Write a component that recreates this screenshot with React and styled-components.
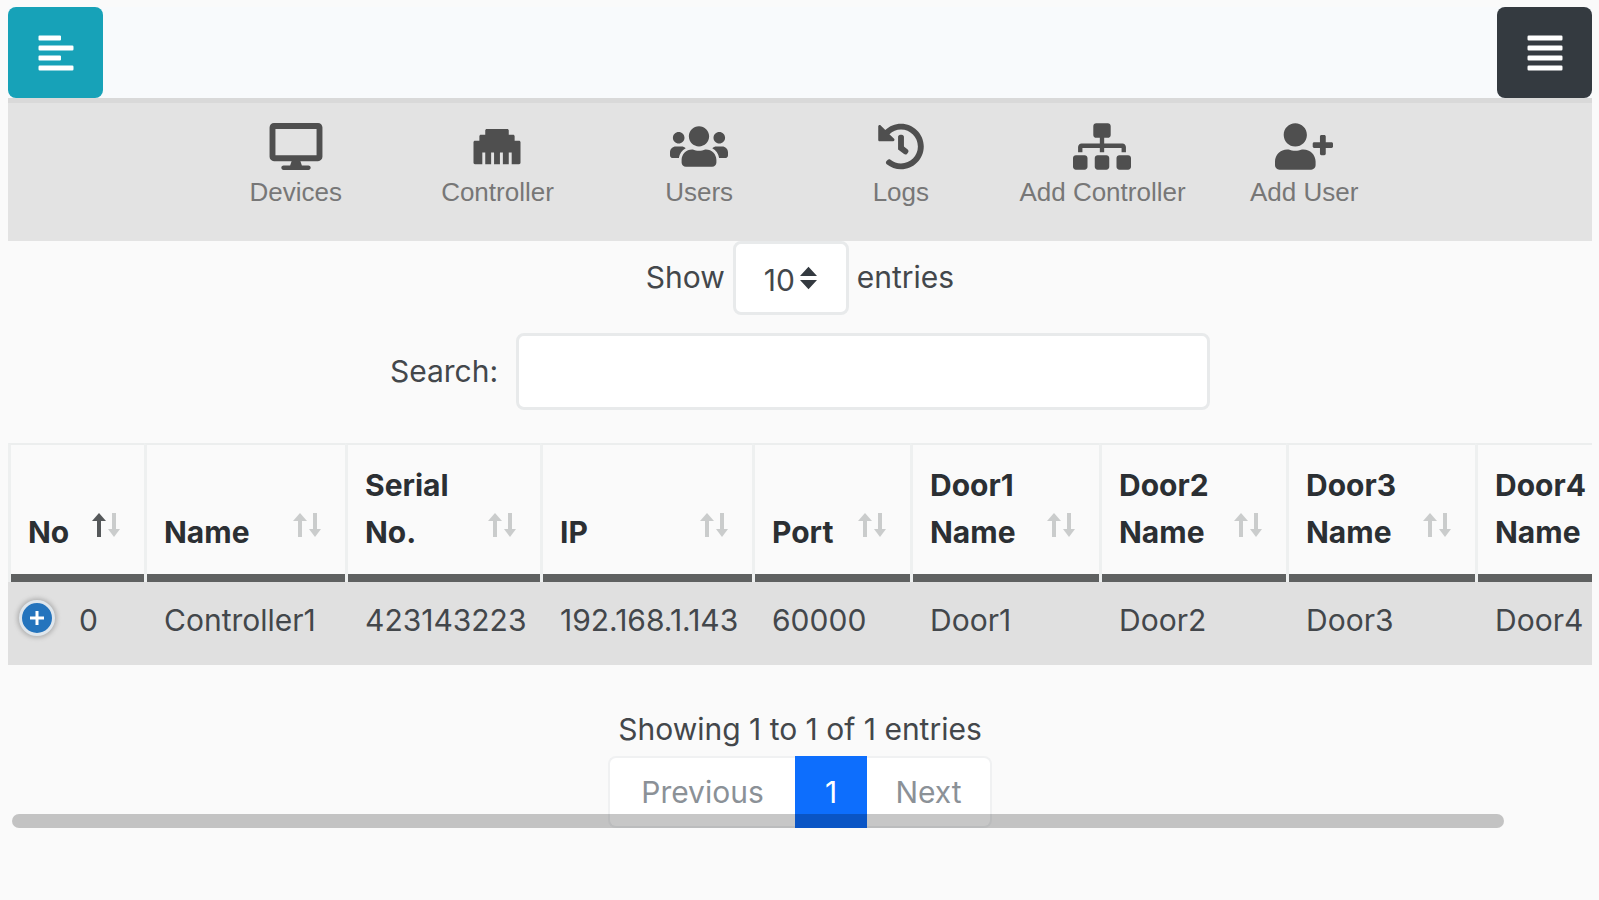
import React from 'react';
import styled, { createGlobalStyle } from 'styled-components';
import {
  FaAlignLeft,
  FaAlignJustify,
  FaDesktop,
  FaEthernet,
  FaUsers,
  FaHistory,
  FaSitemap,
  FaUserPlus,
} from 'react-icons/fa';

const GlobalStyle = createGlobalStyle`
  * {
    box-sizing: border-box;
  }

  body {
    margin: 0;
    background: #fafafa;
    color: #43474b;
    font-family: Inter, 'Liberation Sans', sans-serif;
    font-size: 30px;
    line-height: 47px;
  }

  button, input, select {
    font: inherit;
    color: inherit;
  }
`;

const Page = styled.div`
  padding: 7px 7px 0 8px;
`;

const TopBar = styled.header`
  display: flex;
  justify-content: space-between;
  background: #f8fafc;
`;

const ToggleButton = styled.button`
  display: flex;
  align-items: center;
  justify-content: center;
  width: 95px;
  height: 91px;
  padding: 0;
  border: 0;
  border-radius: 8px;
  background: ${(props) => (props.$dark ? '#343a40' : '#17a2b8')};
  color: white;
  cursor: pointer;

  svg {
    width: 36px;
    height: 40px;
  }
`;

const Nav = styled.nav`
  height: 143px;
  border-top: 5px solid #d9d9d9;
  background: #e3e3e3;
`;

const NavList = styled.div`
  display: grid;
  grid-template-columns: repeat(6, 1fr);
  max-width: 1210px;
  margin: 0 auto;
  padding-top: 20px;
`;

const NavLink = styled.a`
  display: flex;
  flex-direction: column;
  align-items: center;
  gap: 6px;
  color: #777;
  font-family: 'Liberation Sans', sans-serif;
  font-size: 26px;
  line-height: 32px;
  text-decoration: none;
  white-space: nowrap;

  svg {
    width: 58px;
    height: 47px;
    color: #4f4f4f;
  }
`;

const LengthRow = styled.label`
  display: flex;
  justify-content: center;
  gap: 8px;
  line-height: 72px;
`;

const SelectBox = styled.span`
  position: relative;
  display: block;
  width: 116px;
  height: 74px;

  svg {
    position: absolute;
    top: 25px;
    right: 32px;
    width: 17px;
    height: 24px;
    pointer-events: none;
  }
`;

const Select = styled.select`
  appearance: none;
  width: 100%;
  height: 100%;
  padding: 0 28px;
  border: 3px solid #e8eaeb;
  border-radius: 8px;
  background: white;
`;

const SearchRow = styled.label`
  display: flex;
  align-items: center;
  justify-content: center;
  gap: 18px;
  margin-top: 18px;
`;

const SearchInput = styled.input`
  width: 694px;
  height: 77px;
  padding: 0 24px;
  border: 3px solid #e8eaeb;
  border-radius: 8px;
  background: white;
`;

const TableWrap = styled.div`
  margin-top: 33px;
  overflow-x: auto;
  scrollbar-width: none;
`;

const Table = styled.table`
  table-layout: fixed;
  width: 1664px;
  border-collapse: separate;
  border-spacing: 0;
`;

/* The dark rule is an inset shadow, so the column borders cut straight through it */
const HeadCell = styled.th`
  height: 139px;
  padding: 0 24px 26px 17px;
  border-top: 2px solid #eceeee;
  border-left: 3px solid #eef0f0;
  box-shadow: inset 0 -8px #5f6161;
  color: #2b2f33;
  font-weight: 700;
  text-align: left;
  vertical-align: bottom;
`;

const SortButton = styled.button`
  display: flex;
  align-items: flex-end;
  justify-content: space-between;
  width: 100%;
  padding: 0;
  border: 0;
  background: none;
  text-align: left;
  cursor: pointer;

  svg {
    flex: none;
    width: 28px;
    height: 24px;
    margin-bottom: 19px;
  }
`;

const Cell = styled.td`
  height: 83px;
  padding: 0 0 6px 20px;
  background: #e0e0e0;
  white-space: nowrap;
`;

const FirstCell = styled.div`
  display: flex;
  align-items: center;
  gap: 24px;
  margin-left: -9px;
`;

const ExpandButton = styled.button`
  display: flex;
  align-items: center;
  justify-content: center;
  width: 36px;
  height: 36px;
  margin-bottom: 6px;
  padding: 0;
  border: 3px solid #dfe6ec;
  border-radius: 50%;
  box-shadow: 0 0 4px 2px #b4b4b4;
  background: #2474bd;
  color: white;
  cursor: pointer;

  svg {
    width: 16px;
    height: 16px;
  }
`;

const Footer = styled.footer`
  position: relative;
  display: flex;
  flex-direction: column;
  align-items: center;
  padding-top: 41px;
`;

const Info = styled.div`
  height: 50px;
`;

const Pagination = styled.div`
  display: flex;
  height: 72px;
`;

const PageButton = styled.button`
  width: ${(props) => props.$width};
  padding: 0;
  border: ${(props) => (props.$active ? '0' : '2px solid #f0f1f2')};
  border-left-width: ${(props) => (props.$last ? '0' : '')};
  border-right-width: ${(props) => (props.$first ? '0' : '')};
  border-radius: ${(props) => (props.$first ? '8px 0 0 8px' : props.$last ? '0 8px 8px 0' : '0')};
  background: ${(props) => (props.$active ? '#0d6efd' : 'white')};
  color: ${(props) => (props.$active ? 'white' : '#8b9197')};
  cursor: pointer;
`;

/* Overlay scroll thumb, drawn on top of the pagination */
const ScrollThumb = styled.div`
  position: absolute;
  left: 4px;
  right: 88px;
  bottom: 0;
  height: 14px;
  border-radius: 7px;
  background: rgba(0, 0, 0, 0.22);
  pointer-events: none;
`;

const SortIcon = ({ active }) => (
  <svg viewBox="0 0 28 24" aria-hidden="true">
    <path d="M7 0 L14 8 H9 V24 H5 V8 H0 Z" fill={active ? '#55585a' : '#cacccc'} />
    <path d="M22 24 L16 16 H20 V0 H24 V16 H28 Z" fill="#cacccc" />
  </svg>
);

const navItems = [
  { label: 'Devices', Icon: FaDesktop },
  { label: 'Controller', Icon: FaEthernet },
  { label: 'Users', Icon: FaUsers },
  { label: 'Logs', Icon: FaHistory },
  { label: 'Add Controller', Icon: FaSitemap },
  { label: 'Add User', Icon: FaUserPlus },
];

const columns = [
  { lines: ['No'], width: 136 },
  { lines: ['Name'], width: 201 },
  { lines: ['Serial', 'No.'], width: 195 },
  { lines: ['IP'], width: 212 },
  { lines: ['Port'], width: 158 },
  { lines: ['Door1', 'Name'], width: 189 },
  { lines: ['Door2', 'Name'], width: 187 },
  { lines: ['Door3', 'Name'], width: 189 },
  { lines: ['Door4', 'Name'], width: 197 },
];

const rows = [
  ['0', 'Controller1', '423143223', '192.168.1.143', '60000', 'Door1', 'Door2', 'Door3', 'Door4'],
];

const App = () => {
  return (
    <Page>
      <GlobalStyle />
      <TopBar>
        <ToggleButton aria-label="Toggle sidebar">
          <FaAlignLeft />
        </ToggleButton>
        <ToggleButton $dark aria-label="Toggle menu">
          <FaAlignJustify />
        </ToggleButton>
      </TopBar>

      <Nav>
        <NavList>
          {navItems.map(({ label, Icon }) => (
            <NavLink href="#" key={label}>
              <Icon />
              {label}
            </NavLink>
          ))}
        </NavList>
      </Nav>

      <LengthRow htmlFor="length">
        Show
        <SelectBox>
          <Select id="length" defaultValue="10">
            <option>10</option>
            <option>25</option>
            <option>50</option>
          </Select>
          <svg viewBox="0 0 18 24" aria-hidden="true">
            <path d="M9 0 L18 10 H0 Z M0 14 H18 L9 24 Z" fill="#343a40" />
          </svg>
        </SelectBox>
        entries
      </LengthRow>

      <SearchRow htmlFor="search">
        Search:
        <SearchInput id="search" type="search" />
      </SearchRow>

      <TableWrap>
        <Table>
          <colgroup>
            {columns.map((column) => (
              <col key={column.lines.join(' ')} style={{ width: column.width }} />
            ))}
          </colgroup>
          <thead>
            <tr>
              {columns.map((column, index) => (
                <HeadCell key={column.lines.join(' ')} scope="col">
                  <SortButton>
                    <span>
                      {column.lines[0]}
                      {column.lines[1] && <br />}
                      {column.lines[1]}
                    </span>
                    <SortIcon active={index === 0} />
                  </SortButton>
                </HeadCell>
              ))}
            </tr>
          </thead>
          <tbody>
            {rows.map((row) => (
              <tr key={row[0]}>
                {row.map((value, index) => (
                  <Cell key={columns[index].lines.join(' ')}>
                    {index === 0 ? (
                      <FirstCell>
                        <ExpandButton aria-label="Show details">
                          <svg viewBox="0 0 16 16" aria-hidden="true">
                            <path d="M8 1 V15 M1 8 H15" stroke="currentColor" strokeWidth="3" />
                          </svg>
                        </ExpandButton>
                        {value}
                      </FirstCell>
                    ) : (
                      value
                    )}
                  </Cell>
                ))}
              </tr>
            ))}
          </tbody>
        </Table>
      </TableWrap>

      <Footer>
        <Info>Showing 1 to 1 of 1 entries</Info>
        <Pagination>
          <PageButton $first $width="187px">Previous</PageButton>
          <PageButton $active $width="72px">1</PageButton>
          <PageButton $last $width="125px">Next</PageButton>
        </Pagination>
        <ScrollThumb />
      </Footer>
    </Page>
  );
};

export default App;
